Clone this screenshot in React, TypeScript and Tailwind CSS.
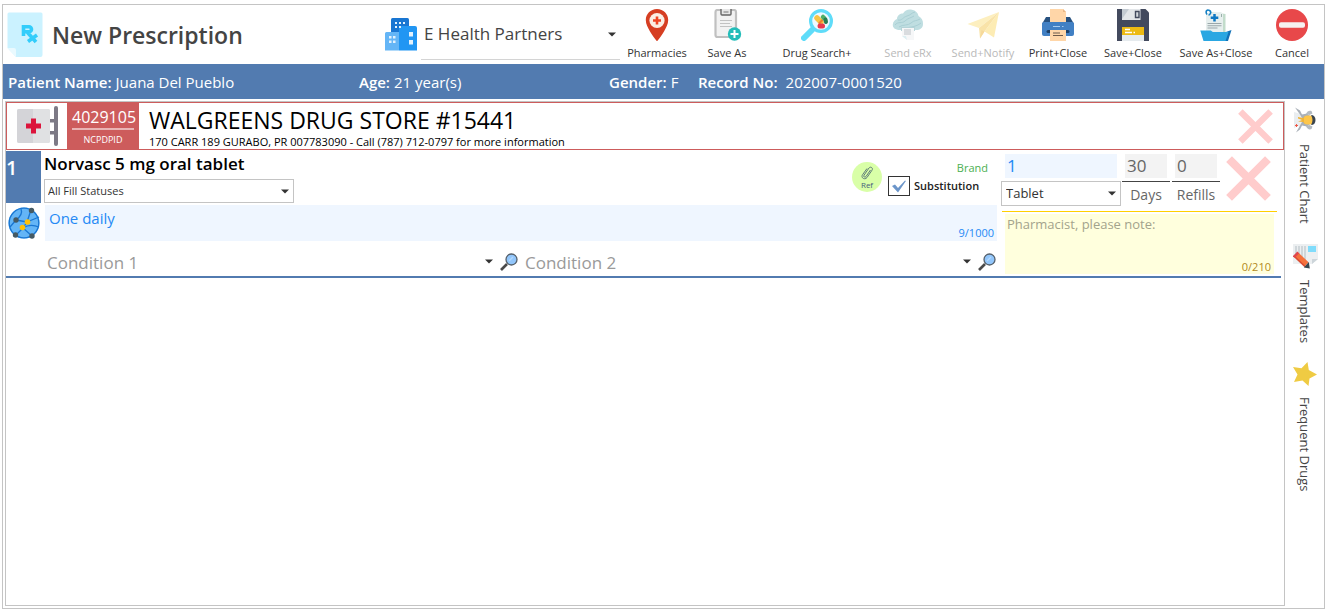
import { useId, type ReactNode } from "react";

function Caret({ className = "" }: { className?: string }) {
  return (
    <svg viewBox="0 0 8 5" className={`pointer-events-none h-[5px] w-2 ${className}`} aria-hidden="true">
      <path d="M0 0.5h8L4 4.5z" fill="#333" />
    </svg>
  );
}

function PrescriptionIcon() {
  return (
    <svg viewBox="0 0 36 46" className="h-[46px] w-9 shrink-0" aria-hidden="true">
      <path d="M2 0.5h32a1.500 1.500 0 0 1 1.500 1.500v41a2 2 0 0 1-2 2H9L0.500 36V2A1.500 1.500 0 0 1 2 0.500z" fill="#cbf2ff" />
      <path d="M0.500 36H7a2 2 0 0 1 2 2v7z" fill="#eafaff" />
      <path d="M16.500 24V14.800h5.500a2.300 2.300 0 0 1 0 5h-5.500M20.500 20.500l8.500 9.500M30 23l-9 6.500" fill="none" stroke="#33cdfb" strokeWidth="3.600" />
    </svg>
  );
}

function BuildingsIcon() {
  return (
    <svg viewBox="0 0 32 33" className="h-[33px] w-8 shrink-0" aria-hidden="true">
      <path d="M6 1.500A1.500 1.500 0 0 1 7.500 0h15A1.500 1.500 0 0 1 24 1.500V20H6z" fill="#1976d2" />
      <path d="M0 15.500A1.500 1.500 0 0 1 1.500 14H14v18.500H0z" fill="#64b5f6" />
      <path d="M14 10a2 2 0 0 1 2-2h14a2 2 0 0 1 2 2v22.500H14z" fill="#2196f3" />
      <path d="M10 4h2v2h-2zM14 4h2v2h-2zM18 4h2v2h-2zM10 8h2v2h-2zM14 8h2v2h-2zM4 18h2.500v2.500H4zM8 18h2.500v2.500H8zM4 22.500h2.500V25H4zM8 22.500h2.500V25H8zM24 14h4v4.500h-4zM24 22h4v4.500h-4z" fill="#e3f2fd" />
    </svg>
  );
}

function PinIcon() {
  return (
    <svg viewBox="0 0 32 32" className="size-8" aria-hidden="true">
      <path d="M16 0C9.500 0 4.800 5 4.800 11c0 4 2 7.500 4.200 11.500 2 3.500 4.500 7 6.500 9.300.3.300.7.300 1 0 2-2.300 4.500-5.800 6.500-9.300 2.200-4 4.200-7.500 4.200-11.500C27.200 5 22.500 0 16 0z" fill="#d63e22" />
      <circle cx="16" cy="11.500" r="7.600" fill="#fbeee4" />
      <path d="M14.700 7.500h2.600v2.700H20v2.600h-2.700v2.700h-2.600v-2.700H12v-2.600h2.700z" fill="#ee4423" />
    </svg>
  );
}

function ClipboardIcon() {
  return (
    <svg viewBox="0 0 32 32" className="size-8" aria-hidden="true">
      <rect x="4.500" y="1" width="20.500" height="27" rx="2" fill="#f2f2f2" stroke="#c0c0c0" strokeWidth="2.200" />
      <path d="M10 0h10v5a1 1 0 0 1-1 1h-8a1 1 0 0 1-1-1z" fill="#e6e6e6" />
      <path d="M10 0v5a1 1 0 0 0 1 1h8a1 1 0 0 0 1-1V0" fill="none" stroke="#666" strokeWidth="1.400" />
      <path d="M12.500 3h5" stroke="#777" />
      <path d="M9 11.500h12M9 14.500h10M9 17.500h12" stroke="#c2c2c2" strokeWidth="1.200" />
      <circle cx="23.500" cy="25" r="6.700" fill="#24bdb9" />
      <path d="M23.500 21v8M19.500 25h8" stroke="#fff" strokeWidth="2" />
    </svg>
  );
}

function DrugSearchIcon() {
  return (
    <svg viewBox="0 0 32 32" className="size-8" aria-hidden="true">
      <path d="M3 29l8-8" stroke="#5fdcf9" strokeWidth="6" strokeLinecap="round" />
      <path d="M10 22l4-4" stroke="#5fdcf9" strokeWidth="2.500" />
      <circle cx="20" cy="12" r="10.400" fill="#eef8ff" stroke="#5fdcf9" strokeWidth="3.200" />
      <path d="M16 9l4 4" stroke="#f6c445" strokeWidth="5.500" strokeLinecap="round" />
      <path d="M19 12l1.500 1.500" stroke="#f07f31" strokeWidth="5.500" />
      <path d="M22 8l1.500 1.500" stroke="#4caf6a" strokeWidth="4.500" strokeLinecap="round" />
      <path d="M24.500 10.500l.5 2.500" stroke="#287d55" strokeWidth="4" strokeLinecap="round" />
      <path d="M19 17h2.500" stroke="#e9394f" strokeWidth="5" strokeLinecap="round" />
    </svg>
  );
}

function CloudIcon() {
  return (
    <svg viewBox="0 0 32 32" className="size-8" aria-hidden="true">
      <path d="M8 21C3 21 .5 18.500.8 15.500 1 12.500 3 11 5 10c0-3.500 3-5.500 6-5.500C13 1 16.500 0 20 .8c3.500.7 6 3.200 6.500 6.200 3 1.500 4.800 4.500 4.500 8 0 4-3 6-7 6z" fill="#bfdee1" />
      <path d="M3 16c3-4 7-1 10-4s6-3 9-5M7 18c4-3 9-1 12-4s6-2 9-4M6 11c4 1 5-3 9-4s4-3 8-4M14 19c4-1 10-1 15-5" fill="none" stroke="#a9cfd4" strokeWidth="1" />
      <path d="M9 18h14v4H9z" fill="#b5d4d8" />
      <path d="M10 19h12v12H15l-5-4z" fill="#f6f7f8" />
      <path d="M12 20h7v6h-7z" fill="#d9dcdf" />
      <path d="M10 27h4l1 4z" fill="#dceef1" />
    </svg>
  );
}

function PlaneIcon() {
  return (
    <svg viewBox="0 0 32 32" className="size-8" aria-hidden="true">
      <path d="M.5 15L32 3 12 19z" fill="#fdefbf" />
      <path d="M32 3L27 28.500l-9.500-6z" fill="#fdecb4" />
      <path d="M32 3L12 19l1 10.500 4.500-7z" fill="#f9e3a8" />
      <path d="M13 29.500l1.500-8.500 3 1.500z" fill="#f6d99b" />
    </svg>
  );
}

function PrinterIcon() {
  return (
    <svg viewBox="0 0 32 32" className="size-8" aria-hidden="true">
      <path d="M4 8h24l4 7H0z" fill="#27517f" />
      <path d="M8 0h13l3 3v10H8z" fill="#ffd6a8" />
      <path d="M21 0v3h3z" fill="#e9b787" />
      <path d="M0 15a2 2 0 0 1 2-2h28a2 2 0 0 1 2 2v10a2 2 0 0 1-2 2H2a2 2 0 0 1-2-2z" fill="#4180c4" />
      <path d="M11 17.500h7M20 17.500h1.500" stroke="#a6ccf0" strokeWidth="1.100" />
      <rect x="4.500" y="21" width="23" height="3" rx="1.500" fill="#1d3f66" />
      <path d="M8 21h16v11H8z" fill="#ffd6a8" />
      <path d="M11 24h7M11 26.500h10" stroke="#6d5a4c" strokeWidth="1" />
    </svg>
  );
}

function FloppyIcon() {
  return (
    <svg viewBox="0 0 32 32" className="size-8" aria-hidden="true">
      <path d="M0 0h28.500L32 3.500V32H0z" fill="#434a5e" />
      <path d="M5 0h18.500v11H5z" fill="#e3e6e9" />
      <path d="M5 0h7L5 10z" fill="#c4cbd2" />
      <path d="M18.500 2.500h3.500v6h-3.500z" fill="#d3d8dc" stroke="#434a5e" strokeWidth="1.400" />
      <path d="M5 18h22v8H5z" fill="#edba12" />
      <path d="M5 26h22v6H5z" fill="#e6ebee" />
      <path d="M8 20.500h5M8 23.500h7M16.500 23.500h1.500" stroke="#fff" strokeWidth="1.300" />
    </svg>
  );
}

function FolderIcon() {
  return (
    <svg viewBox="0 0 32 32" className="size-8" aria-hidden="true">
      <path d="M10 3l15.500 2V28H10z" fill="#c2dccb" />
      <path d="M6 4l15-1 2 2v23H6z" fill="#e7efee" />
      <path d="M23 24l8.500-3-3.500 11h-3z" fill="#1272b8" />
      <path d="M7 5.500C5 2.500 7 0 9.500 1.500S10 6 8.500 6" fill="none" stroke="#1680c4" strokeWidth="1.600" />
      <path d="M14.500 5v7.500M10.700 8.700h7.600" stroke="#0f78c4" strokeWidth="2.500" />
      <path d="M21.500 5v3" stroke="#9ab0aa" />
      <path d="M7.500 14.500h14M7.500 16.700h14M7.500 19h10" stroke="#9ba8ab" strokeWidth="1.100" />
      <path d="M.3 21.500h10.500l2 1.500H28.500L25.500 32H3.500z" fill="#2aa7e2" />
    </svg>
  );
}

function StopIcon() {
  return (
    <svg viewBox="0 0 32 32" className="size-8" aria-hidden="true">
      <circle cx="16" cy="16" r="16" fill="#e8484a" />
      <rect x="3" y="13.200" width="26" height="5.600" rx="2" fill="#f6f1f1" />
    </svg>
  );
}

function PharmacySignIcon() {
  return (
    <svg viewBox="0 0 42 42" className="h-[42px] w-[42px]" aria-hidden="true">
      <path d="M33 14h5v3.500h-5zM33 26h5v3.500h-5z" fill="#7d7a86" />
      <rect x="1" y="4" width="33" height="34" rx="2" fill="#dadbdf" />
      <path d="M17 4h15a2 2 0 0 1 2 2v30a2 2 0 0 1-2 2H17z" fill="#e0e1e3" />
      <path d="M3 4h14v34H3a2 2 0 0 1-2-2V6a2 2 0 0 1 2-2z" fill="#d4d4d8" />
      <rect x="38" y="1" width="4" height="40" rx="2" fill="#7d7a86" />
      <path d="M15 13.500h5v5h5v5h-5v5h-5v-5h-5v-5h5z" fill="#dc143c" />
    </svg>
  );
}

function CrossIcon({ className }: { className: string }) {
  return (
    <svg viewBox="0 0 44 44" className={className} aria-hidden="true">
      <path d="M3 3l38 38M41 3L3 41" stroke="#ffcccc" strokeWidth="8" />
    </svg>
  );
}

function NetworkIcon() {
  return (
    <svg viewBox="0 0 32 32" className="size-8" aria-hidden="true">
      <circle cx="16" cy="16" r="15.500" fill="#64b5f6" />
      <g fill="none" stroke="#1976d2" strokeWidth="1.300">
        <circle cx="16" cy="16" r="14.800" />
        <path d="M23 3L19 15M13 2c2 5-1 8-5 11M8 13L2 20M8 13l11 2M19 15l12-5M19 15l-4 6M15 21L8 28M15 21l9 8M15 21c6-4 11-3 16-1" />
      </g>
      <g fill="#455a64">
        <circle cx="23.500" cy="3.500" r="2.700" />
        <circle cx="8" cy="13" r="2.700" />
        <circle cx="7.500" cy="28" r="2.700" />
        <circle cx="24" cy="29" r="2.700" />
      </g>
      <circle cx="19.500" cy="15" r="2.800" fill="#ffc107" />
      <circle cx="14.500" cy="20.500" r="2.800" fill="#ffc107" />
    </svg>
  );
}

function MagnifierIcon() {
  return (
    <svg viewBox="0 0 18 18" className="size-[18px]" aria-hidden="true">
      <path d="M1 17l6-6" stroke="#4a4a4a" strokeWidth="2.600" />
      <circle cx="11.500" cy="6.500" r="5.500" fill="#92c6fb" stroke="#55606b" strokeWidth="1.300" />
      <path d="M9 8l4-4" stroke="#b4dafe" strokeWidth="1.200" />
    </svg>
  );
}

function ChartPersonIcon() {
  return (
    <svg viewBox="0 0 22 26" className="h-[26px] w-[22px]" aria-hidden="true">
      <path d="M0 5l9 2.500v10L0 21z" fill="#e9edf0" />
      <path d="M1 .5l5 3 2 4 5-1 5 4-1.500 1.500L8 11 6 7.500zM2 25.500l4-3 2-4 5 1 5-4-1.500-1.500L8 15l-2 3.500z" fill="#a9b0b8" />
      <path d="M12 7c1-3 3.500-4 5.500-3l1 2.500-3 1.500zM12 19c1 3 3.500 4 5.500 3l1-2.500-3-1.500z" fill="#b3bac1" />
      <path d="M4 10l5 1 2-2h6v8h-6l-2-2-5-.5 4-1.500-4-1.500z" fill="#f0b437" />
      <rect x="10" y="8.500" width="9" height="9" rx="3" fill="#fdc64b" />
      <path d="M17 8c3 0 4.500 2 4.500 5S20 18 17 18c2-3 2-7 0-10z" fill="#3a444e" />
      <path d="M1 18.500h3M2.500 17v3" stroke="#ee5a48" />
    </svg>
  );
}

function TemplateIcon() {
  return (
    <svg viewBox="0 0 25 26" className="h-[26px] w-[25px]" aria-hidden="true">
      <path d="M0 1h25v15l-6 5H0z" fill="#eceff1" />
      <path d="M3 3v9M6 3v12M9 3v13M12 3v14" stroke="#bcc5cb" strokeWidth="1.200" />
      <path d="M15 3h8v6h-8z" fill="#80dcfb" />
      <path d="M19 21v-5h6z" fill="#cdd5da" />
      <path d="M3.500 12l10 9.500" stroke="#f5713c" strokeWidth="6" />
      <path d="M2 14l10 9.500" stroke="#d94c34" strokeWidth="1.600" />
      <path d="M.8 14L5.300 9.300" stroke="#e0474c" strokeWidth="2.600" />
      <path d="M15.800 19l1 6.500-6-1z" fill="#37474f" />
    </svg>
  );
}

function StarIcon() {
  return (
    <svg viewBox="0 0 24 24" className="size-6" aria-hidden="true">
      <path d="M24 12.500l-7.500 4L15.500 24l-6-5.500L1 20l3.500-7.500L0 5l8.500 1.200L14.500 0l1.300 8z" fill="#efcb43" />
    </svg>
  );
}

type Tool = { label: string; icon: ReactNode; width: string; disabled?: boolean };

const tools: Tool[] = [
  { label: "Pharmacies", icon: <PinIcon />, width: "w-[70px]" },
  { label: "Save As", icon: <ClipboardIcon />, width: "w-[70px]" },
  { label: "Drug Search+", icon: <DrugSearchIcon />, width: "w-[110px]" },
  { label: "Send eRx", icon: <CloudIcon />, width: "w-[72px]", disabled: true },
  { label: "Send+Notify", icon: <PlaneIcon />, width: "w-[78px]", disabled: true },
  { label: "Print+Close", icon: <PrinterIcon />, width: "w-[72px]" },
  { label: "Save+Close", icon: <FloppyIcon />, width: "w-[78px]" },
  { label: "Save As+Close", icon: <FolderIcon />, width: "w-[88px]" },
  { label: "Cancel", icon: <StopIcon />, width: "w-16" },
];

function PracticePicker() {
  return (
    <div className="flex min-w-0 flex-1 items-center pr-0.5">
      <BuildingsIcon />
      <div className="relative ml-1 flex h-full min-w-0 flex-1 items-stretch pb-1">
        <select
          aria-label="Practice"
          className="w-full appearance-none border-b border-[#d4d4d4] bg-transparent pt-1 pl-[3px] text-[17px] text-[#444] outline-none"
        >
          <option>E Health Partners</option>
        </select>
        <Caret className="absolute top-[27px] right-1" />
      </div>
    </div>
  );
}

function Header() {
  return (
    <header className="flex h-[59px] items-stretch">
      <div className="flex w-[382px] shrink-0 items-center gap-[9px] pl-1">
        <PrescriptionIcon />
        <h1 className="pt-0.5 text-[23px] font-semibold whitespace-nowrap text-[#444]">New Prescription</h1>
      </div>
      <PracticePicker />
      <nav className="flex shrink-0" aria-label="Actions">
        {tools.map((t) => (
          <button
            key={t.label}
            type="button"
            disabled={t.disabled}
            className={`flex flex-col items-center gap-1 pt-1 text-[11px] leading-4 whitespace-nowrap ${t.width} ${
              t.disabled ? "text-[#b9b9b9]" : "text-[#333]"
            }`}
          >
            {t.icon}
            {t.label}
          </button>
        ))}
      </nav>
    </header>
  );
}

function PatientBar() {
  return (
    <dl className="flex h-[35px] items-center bg-[#527bb0] pt-0.5 pl-[5px] text-[15px] whitespace-nowrap text-white">
      <div className="flex w-[351px] gap-1">
        <dt className="font-semibold">Patient Name:</dt>
        <dd>Juana Del Pueblo</dd>
      </div>
      <div className="flex w-[250px] gap-1">
        <dt className="font-semibold">Age:</dt>
        <dd>21 year(s)</dd>
      </div>
      <div className="flex w-[89px] gap-1">
        <dt className="font-semibold">Gender:</dt>
        <dd>F</dd>
      </div>
      <div className="flex gap-2">
        <dt className="font-semibold">Record No:</dt>
        <dd>202007-0001520</dd>
      </div>
    </dl>
  );
}

function PharmacyCard() {
  return (
    <section className="flex h-12 items-stretch border border-[#cd5c5c]">
      <div className="flex w-[60px] shrink-0 items-center justify-end pr-[9px]">
        <PharmacySignIcon />
      </div>
      <div className="flex w-[72px] shrink-0 flex-col items-center bg-[#cd5c5c] px-[5px] text-white">
        <div className="w-full border-b-2 border-[#e9b4b4] pt-[3px] text-center text-[16px] leading-[22px]">4029105</div>
        <div className="pt-0.5 text-[9px] leading-4">NCPDPID</div>
      </div>
      <div className="min-w-0 flex-1 pt-px pl-[10px] whitespace-nowrap text-black">
        <h2 className="text-[23px] leading-8">WALGREENS DRUG STORE #15441</h2>
        <p className="text-[11px] leading-3">170 CARR 189 GURABO, PR 007783090 - Call (787) 712-0797 for more information</p>
      </div>
      <button type="button" aria-label="Remove pharmacy" className="mr-[10px] self-center">
        <CrossIcon className="size-[35px]" />
      </button>
    </section>
  );
}

function Condition({ label }: { label: string }) {
  return (
    <div className="flex min-w-0 flex-1 items-center">
      <div className="relative flex min-w-0 flex-1 items-center">
        <select
          aria-label={label}
          className="h-7 w-full appearance-none bg-transparent pt-0.5 text-[17px] text-[#9a9a9a] outline-none"
        >
          <option>{label}</option>
        </select>
        <Caret className="absolute right-[7px]" />
      </div>
      <button type="button" aria-label={`Search ${label}`} className="mr-[7px]">
        <MagnifierIcon />
      </button>
    </div>
  );
}

function Amount({ label, value }: { label: string; value: string }) {
  const id = useId();
  return (
    <div className="flex w-12 flex-col items-center">
      <div className="w-full border-b border-[#444] px-[3px] pb-[3px]">
        <input
          id={id}
          defaultValue={value}
          className="block h-6 w-full bg-[#f3f3f3] px-0.5 text-[17px] text-[#666] outline-none"
        />
      </div>
      <label htmlFor={id} className="pt-[3px] text-[14px] leading-5 text-[#666]">
        {label}
      </label>
    </div>
  );
}

function PrescriptionItem() {
  return (
    <section className="mt-px mr-[3px] flex h-[127px] border-b-2 border-[#527bb0]">
      <div className="flex min-w-0 flex-1 flex-col">
        <div className="flex h-[52px]">
          <div className="w-[35px] shrink-0 bg-[#527bb0] text-[20px] leading-[34px] font-semibold text-white">1</div>
          <div className="ml-[3px] flex w-[250px] flex-col gap-0.5">
            <h3 className="text-[17px] leading-[26px] font-semibold whitespace-nowrap text-black">Norvasc 5 mg oral tablet</h3>
            <div className="relative flex items-center">
              <select
                aria-label="Fill status"
                className="h-6 w-full appearance-none border border-[#c4c4c4] bg-white pl-[3px] text-[11px] text-[#333] outline-none"
              >
                <option>All Fill Statuses</option>
              </select>
              <Caret className="absolute right-[5px]" />
            </div>
          </div>
          <div className="ml-auto flex pt-2 pr-[9px]">
            <button
              type="button"
              className="mt-[3px] mr-1.5 flex size-[30px] flex-col items-center justify-center rounded-full bg-[#d9ffa8] text-[8px] leading-[9px] text-[#46617c]"
            >
              <svg viewBox="0 0 14 15" className="h-[15px] w-3.5" aria-hidden="true">
                <path
                  d="M10.500 5L6 11.500c-1 1.500-3 .3-2-1.300L9 3c1.500-2 4.500 0 3 2.200L7 12.500c-2 2.800-6.500.5-4.500-2.700L7 3.500"
                  fill="none"
                  stroke="#5d7c78"
                />
              </svg>
              Ref
            </button>
            <div className="flex w-[100px] flex-col">
              <div className="text-right text-[11px] leading-[17px] text-[#4caf50]">Brand</div>
              <label className="flex items-center gap-1 text-[11px] leading-5 font-semibold text-[#222]">
                <span className="relative flex h-5 w-[22px]">
                  <input
                    type="checkbox"
                    defaultChecked
                    className="peer h-5 w-[22px] appearance-none border border-[#333] bg-white"
                  />
                  <svg
                    viewBox="0 0 22 20"
                    className="pointer-events-none absolute inset-0 hidden h-5 w-[22px] peer-checked:block"
                    aria-hidden="true"
                  >
                    <path d="M4 10l3-1.500 3 3.500 7-7.500.9.500-7.900 11.500z" fill="#6b95c9" />
                  </svg>
                </span>
                Substitution
              </label>
            </div>
          </div>
        </div>
        <div className="mt-0.5 flex h-9">
          <div className="flex w-[39px] shrink-0 items-center pl-0.5">
            <NetworkIcon />
          </div>
          <div className="relative flex-1">
            <textarea
              aria-label="Directions"
              defaultValue="One daily"
              className="block h-9 w-full resize-none bg-[#eff6ff] px-1 pt-px text-[15px] leading-6 text-[#2489f5] outline-none"
            />
            <span className="absolute right-[3px] bottom-0 text-[11px] leading-4 text-[#2489f5]">9/1000</span>
          </div>
        </div>
        <div className="-mr-1.5 flex flex-1 items-center pt-1.5 pl-[41px]">
          <Condition label="Condition 1" />
          <Condition label="Condition 2" />
        </div>
      </div>
      <div className="ml-1 w-[280px] shrink-0 pt-[3px]">
        <div className="flex h-[57px]">
          <div className="flex w-[120px] flex-col gap-[3px]">
            <input
              aria-label="Quantity"
              defaultValue="1"
              className="mx-1 block h-6 bg-[#eff6ff] px-0.5 text-[17px] text-[#2489f5] outline-none"
            />
            <div className="relative flex items-center">
              <select
                aria-label="Unit"
                className="h-[25px] w-full appearance-none border border-[#c4c4c4] bg-white pl-1 text-[13px] text-[#333] outline-none"
              >
                <option>Tablet</option>
              </select>
              <Caret className="absolute right-[5px]" />
            </div>
          </div>
          <div className="ml-px flex gap-0.5">
            <Amount label="Days" value="30" />
            <Amount label="Refills" value="0" />
          </div>
          <button type="button" aria-label="Remove drug" className="ml-1.5 self-start pt-0.5">
            <CrossIcon className="size-[45px]" />
          </button>
        </div>
        <div className="relative mr-1 ml-px border-t border-[#ffd000] px-[3px] pt-0.5">
          <textarea
            aria-label="Note to pharmacist"
            placeholder="Pharmacist, please note:"
            className="block h-[60px] w-full resize-none bg-[#ffffdd] px-0.5 text-[13px] leading-5 outline-none placeholder:text-[#a3a38c]"
          />
          <span className="absolute right-1.5 bottom-px text-[11px] leading-3 text-[#b28a1c]">0/210</span>
        </div>
      </div>
    </section>
  );
}

const sideTabs = [
  { label: "Patient Chart", icon: <ChartPersonIcon /> },
  { label: "Templates", icon: <TemplateIcon /> },
  { label: "Frequent Drugs", icon: <StarIcon /> },
];

function SideTabs() {
  return (
    <nav aria-label="Panels" className="flex w-[39px] shrink-0 flex-col items-center gap-[19px] pt-2 pl-px">
      {sideTabs.map((t) => (
        <button key={t.label} type="button" className="flex flex-col items-center gap-[11px]">
          {t.icon}
          <span className="text-[13px] leading-4 whitespace-nowrap text-[#444] [writing-mode:vertical-rl]">{t.label}</span>
        </button>
      ))}
    </nav>
  );
}

export default function App() {
  return (
    <div className="flex min-h-screen bg-white pt-1 pr-[7px] pb-[5px] pl-0.5 font-['Open_Sans','Noto_Sans',sans-serif]">
      <div className="flex min-w-0 flex-1 flex-col border border-[#c4c4c4]">
        <Header />
        <PatientBar />
        <div className="flex flex-1">
          <main className="mt-0.5 mb-0.5 ml-0.5 min-w-0 flex-1 border border-[#c4c4c4]">
            <PharmacyCard />
            <PrescriptionItem />
          </main>
          <SideTabs />
        </div>
      </div>
    </div>
  );
}
